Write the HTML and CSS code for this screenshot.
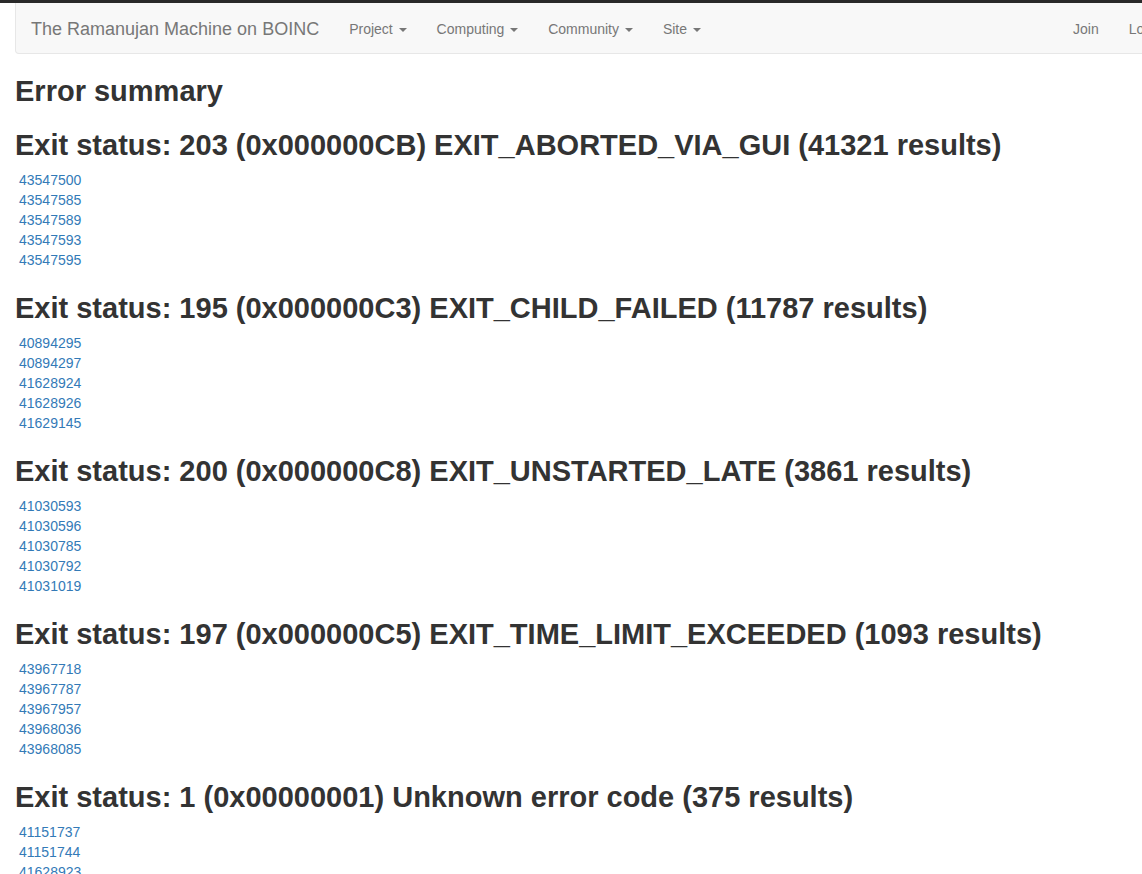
FILE: index.html
```html
<!DOCTYPE html>
<html>
<head>
<meta charset="utf-8">
<title>Error summary</title>
<link rel="stylesheet" href="styles.css">
</head>
<body>
<div class="topbar"></div>
<div class="page">
  <nav class="navbar">
    <a class="brand" href="#">The Ramanujan Machine on BOINC</a>
    <ul class="nav">
      <li><a href="#">Project <span class="caret"></span></a></li>
      <li><a href="#">Computing <span class="caret"></span></a></li>
      <li><a href="#">Community <span class="caret"></span></a></li>
      <li><a href="#">Site <span class="caret"></span></a></li>
    </ul>
    <ul class="nav nav-right">
      <li><a href="#">Join</a></li>
      <li><a href="#">Login</a></li>
    </ul>
  </nav>

  <h2 class="title">Error summary</h2>

  <h2 class="status">Exit status: 203 (0x000000CB) EXIT_ABORTED_VIA_GUI (41321 results)</h2>
  <div class="results">
    <a href="#">43547500</a>
    <a href="#">43547585</a>
    <a href="#">43547589</a>
    <a href="#">43547593</a>
    <a href="#">43547595</a>
  </div>

  <h2 class="status">Exit status: 195 (0x000000C3) EXIT_CHILD_FAILED (11787 results)</h2>
  <div class="results">
    <a href="#">40894295</a>
    <a href="#">40894297</a>
    <a href="#">41628924</a>
    <a href="#">41628926</a>
    <a href="#">41629145</a>
  </div>

  <h2 class="status">Exit status: 200 (0x000000C8) EXIT_UNSTARTED_LATE (3861 results)</h2>
  <div class="results">
    <a href="#">41030593</a>
    <a href="#">41030596</a>
    <a href="#">41030785</a>
    <a href="#">41030792</a>
    <a href="#">41031019</a>
  </div>

  <h2 class="status">Exit status: 197 (0x000000C5) EXIT_TIME_LIMIT_EXCEEDED (1093 results)</h2>
  <div class="results">
    <a href="#">43967718</a>
    <a href="#">43967787</a>
    <a href="#">43967957</a>
    <a href="#">43968036</a>
    <a href="#">43968085</a>
  </div>

  <h2 class="status">Exit status: 1 (0x00000001) Unknown error code (375 results)</h2>
  <div class="results">
    <a href="#">41151737</a>
    <a href="#">41151744</a>
    <a href="#">41628923</a>
  </div>
</div>
</body>
</html>
```

FILE: styles.css
```css
html, body {
  overflow-x: hidden;
}
body {
  margin: 0;
  font-family: "Liberation Sans", Arial, sans-serif;
  font-size: 14px;
  line-height: 1.42857;
  color: #333;
  background: #fff;
}
.topbar {
  height: 3px;
  background: #2a2a2a;
}
.page {
  padding: 0 15px;
}
.navbar {
  display: flex;
  align-items: stretch;
  width: 1164px;
  height: 51px;
  box-sizing: border-box;
  background: #f8f8f8;
  border: 1px solid #e7e7e7;
  border-top: none;
  border-radius: 0 0 4px 4px;
  margin-bottom: 20px;
}
.brand {
  display: block;
  padding: 16px 15px 14px;
  font-size: 18px;
  line-height: 20px;
  color: #777;
  text-decoration: none;
}
.nav {
  display: flex;
  list-style: none;
  margin: 0;
  padding: 0;
}
.nav a {
  display: block;
  padding: 16px 15px 14px;
  line-height: 20px;
  color: #777;
  text-decoration: none;
}
.nav-right {
  margin-left: auto;
}
.caret {
  display: inline-block;
  width: 0;
  height: 0;
  margin-left: 2px;
  vertical-align: middle;
  border-top: 4px solid;
  border-right: 4px solid transparent;
  border-left: 4px solid transparent;
}
h2 {
  font-size: 29px;
  font-weight: 700;
  line-height: 33px;
  margin: 21px 0 8px;
  color: #333;
}
.results {
  padding-left: 4px;
  padding-bottom: 1px;
}
.results a {
  display: block;
  width: max-content;
  color: #337ab7;
  text-decoration: none;
  line-height: 20px;
}
```
